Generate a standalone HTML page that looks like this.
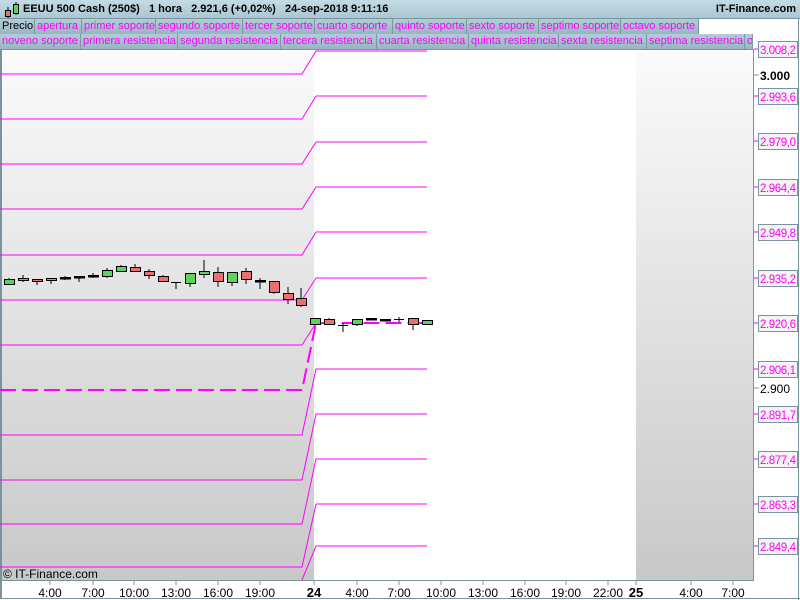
<!DOCTYPE html>
<html><head><meta charset="utf-8"><style>
*{margin:0;padding:0;box-sizing:border-box}
body{width:800px;height:600px;overflow:hidden;background:#fff;font-family:"Liberation Sans",sans-serif;position:relative}
#title{position:absolute;left:0;top:0;width:800px;height:19px;background:linear-gradient(#c4dbe5,#a9c7d3);border-bottom:1px solid #7a949e;font-size:11px;font-weight:bold;color:#000;line-height:19px}
.row{position:absolute;left:0;height:16px;width:753px}
.c{position:absolute;top:0;height:16px;background:linear-gradient(#b3cdd8,#97b6c2);border-right:1px solid #7c98a4;border-bottom:1px solid #7c98a4;color:#f0f;font-size:11px;line-height:15px;padding-left:2px;white-space:nowrap;overflow:hidden}
svg{position:absolute;left:0;top:0}
</style></head><body>
<svg width="800" height="600" font-family="Liberation Sans, sans-serif">
<defs>
<linearGradient id="g" x1="0" y1="0" x2="0" y2="1"><stop offset="0" stop-color="#fbfbfb"/><stop offset="1" stop-color="#c8c8c8"/></linearGradient>
</defs>
<rect x="0" y="49" width="314" height="531" fill="url(#g)"/>
<rect x="314" y="49" width="322" height="531" fill="#fff"/>
<rect x="636" y="49" width="117" height="531" fill="url(#g)"/>
<line x1="1" y1="49" x2="1" y2="598" stroke="#7a949e" stroke-width="2"/>
<line x1="753.5" y1="49" x2="753.5" y2="580" stroke="#7a949e"/>
<line x1="0" y1="580.5" x2="754" y2="580.5" stroke="#7a949e"/>
<line x1="0" y1="598.5" x2="800" y2="598.5" stroke="#7a949e"/>
<line x1="798.5" y1="19" x2="798.5" y2="600" stroke="#7a949e"/>
<g stroke="#f0f" fill="none" stroke-width="1">
<path d="M0 74H302L316 51H427"/>
<path d="M0 119H302L316 96H427"/>
<path d="M0 164H302L316 142H427"/>
<path d="M0 209H302L316 187H427"/>
<path d="M0 255H302L316 232H427"/>
<path d="M0 300H302L316 278H427"/>
<path d="M0 345H302L316 323"/>
<path d="M0 435H302L316 369H427"/>
<path d="M0 480H302L316 414H427"/>
<path d="M0 524H302L316 459H427"/>
<path d="M0 567H302L316 504H427"/>
<path d="M302 580L316 546H427"/>
<path d="M0 390H302L316 323H427" stroke-width="2" stroke-dasharray="16,6"/>
</g>
<g stroke="#000" stroke-width="1">
<line x1="9" y1="278" x2="9" y2="285"/><rect x="4.5" y="279.5" width="10" height="5" fill="#5dd35d"/>
<line x1="23" y1="275" x2="23" y2="282"/><rect x="18.5" y="278.5" width="10" height="2" fill="#5dd35d"/>
<line x1="37" y1="279" x2="37" y2="285"/><rect x="32.5" y="279.5" width="10" height="2" fill="#e87070"/>
<line x1="51" y1="278" x2="51" y2="284"/><rect x="46.5" y="278.5" width="10" height="2" fill="#5dd35d"/>
<line x1="65" y1="276" x2="65" y2="280"/><rect x="60.5" y="277.5" width="10" height="1.5" fill="#000"/>
<line x1="79" y1="276" x2="79" y2="282"/><rect x="74.5" y="276.5" width="10" height="1.5" fill="#000"/>
<line x1="93" y1="273" x2="93" y2="278"/><rect x="88.5" y="275.5" width="10" height="1.5" fill="#000"/>
<line x1="107" y1="268" x2="107" y2="278"/><rect x="102.5" y="270.5" width="10" height="6" fill="#5dd35d"/>
<line x1="121" y1="265" x2="121" y2="272"/><rect x="116.5" y="266.5" width="10" height="5" fill="#5dd35d"/>
<line x1="135" y1="264" x2="135" y2="272"/><rect x="130.5" y="267.5" width="10" height="4" fill="#e87070"/>
<line x1="149" y1="269" x2="149" y2="279"/><rect x="144.5" y="271.5" width="10" height="4" fill="#e87070"/>
<line x1="163" y1="275" x2="163" y2="282"/><rect x="158.5" y="276.5" width="10" height="5" fill="#e87070"/>
<line x1="176" y1="282" x2="176" y2="289"/><line x1="171" y1="282.5" x2="181" y2="282.5"/>
<line x1="190" y1="273" x2="190" y2="287"/><rect x="185.5" y="273.5" width="10" height="10" fill="#5dd35d"/>
<line x1="204" y1="260" x2="204" y2="278"/><rect x="199.5" y="271.5" width="10" height="3" fill="#5dd35d"/>
<line x1="218" y1="267" x2="218" y2="287"/><rect x="213.5" y="272.5" width="10" height="9" fill="#e87070"/>
<line x1="232" y1="272" x2="232" y2="286"/><rect x="227.5" y="272.5" width="10" height="10" fill="#5dd35d"/>
<line x1="246" y1="268" x2="246" y2="284"/><rect x="241.5" y="271.5" width="10" height="8" fill="#e87070"/>
<line x1="260" y1="278" x2="260" y2="289"/><rect x="255.5" y="280.5" width="10" height="1.5" fill="#000"/>
<line x1="274" y1="281" x2="274" y2="294"/><rect x="269.5" y="281.5" width="10" height="11" fill="#e87070"/>
<line x1="288" y1="287" x2="288" y2="304"/><rect x="283.5" y="293.5" width="10" height="6" fill="#e87070"/>
<line x1="301" y1="288" x2="301" y2="307"/><rect x="296.5" y="298.5" width="10" height="7" fill="#e87070"/>
<rect x="310.5" y="318.5" width="10" height="6" fill="#5dd35d"/>
<line x1="329" y1="318" x2="329" y2="324"/><rect x="324.5" y="319.5" width="10" height="5" fill="#e87070"/>
<line x1="343" y1="323" x2="343" y2="332"/><line x1="338" y1="325.5" x2="348" y2="325.5"/>
<line x1="357" y1="319" x2="357" y2="326"/><rect x="352.5" y="319.5" width="10" height="5" fill="#5dd35d"/>
<rect x="366.5" y="318.5" width="10" height="1.5" fill="#000"/>
<rect x="380.5" y="319.5" width="10" height="1.5" fill="#000"/>
<line x1="399" y1="317" x2="399" y2="322"/><line x1="394" y1="319.5" x2="404" y2="319.5"/>
<line x1="413" y1="318" x2="413" y2="330"/><rect x="408.5" y="318.5" width="10" height="6" fill="#e87070"/>
<rect x="422.5" y="320.5" width="10" height="4" fill="#5dd35d"/>
</g>
<g font-size="11.5" fill="#f0f">
<g stroke="#f0f"><line x1="754" y1="49" x2="759" y2="49"/><line x1="754" y1="96" x2="759" y2="96"/><line x1="754" y1="141" x2="759" y2="141"/><line x1="754" y1="187" x2="759" y2="187"/><line x1="754" y1="232" x2="759" y2="232"/><line x1="754" y1="278" x2="759" y2="278"/><line x1="754" y1="323" x2="759" y2="323"/><line x1="754" y1="369" x2="759" y2="369"/><line x1="754" y1="414" x2="759" y2="414"/><line x1="754" y1="459" x2="759" y2="459"/><line x1="754" y1="504" x2="759" y2="504"/><line x1="754" y1="546" x2="759" y2="546"/></g>
<g stroke="#7a949e" fill="#f4f4f4">
<rect x="758.5" y="41.5" width="39" height="16"/><rect x="758.5" y="88.5" width="39" height="16"/><rect x="758.5" y="133.5" width="39" height="16"/><rect x="758.5" y="179.5" width="39" height="16"/><rect x="758.5" y="224.5" width="39" height="16"/><rect x="758.5" y="270.5" width="39" height="16"/><rect x="758.5" y="315.5" width="39" height="16"/><rect x="758.5" y="361.5" width="39" height="16"/><rect x="758.5" y="406.5" width="39" height="16"/><rect x="758.5" y="451.5" width="39" height="16"/><rect x="758.5" y="496.5" width="39" height="16"/><rect x="758.5" y="538.5" width="39" height="16"/>
</g>
<g lengthAdjust="spacingAndGlyphs">
<text x="760" y="54" textLength="36">3.008,2</text><text x="760" y="101" textLength="36">2.993,6</text><text x="760" y="146" textLength="36">2.979,0</text><text x="760" y="192" textLength="36">2.964,4</text><text x="760" y="237" textLength="36">2.949,8</text><text x="760" y="283" textLength="36">2.935,2</text><text x="760" y="328" textLength="36">2.920,6</text><text x="760" y="374" textLength="36">2.906,1</text><text x="760" y="419" textLength="36">2.891,7</text><text x="760" y="464" textLength="36">2.877,4</text><text x="760" y="509" textLength="36">2.863,3</text><text x="760" y="551" textLength="36">2.849,4</text>
</g>
</g>
<g stroke="#7a949e"><line x1="754" y1="75" x2="759" y2="75"/><line x1="754" y1="388" x2="759" y2="388"/></g>
<text x="760" y="80" font-size="12" font-weight="bold">3.000</text>
<text x="760" y="393" font-size="12">2.900</text>
<g stroke="#7a949e"><line x1="50" y1="581" x2="50" y2="585"/><line x1="93" y1="581" x2="93" y2="585"/><line x1="134" y1="581" x2="134" y2="585"/><line x1="176" y1="581" x2="176" y2="585"/><line x1="218" y1="581" x2="218" y2="585"/><line x1="260" y1="581" x2="260" y2="585"/><line x1="314" y1="581" x2="314" y2="585"/><line x1="357" y1="581" x2="357" y2="585"/><line x1="399" y1="581" x2="399" y2="585"/><line x1="441" y1="581" x2="441" y2="585"/><line x1="483" y1="581" x2="483" y2="585"/><line x1="525" y1="581" x2="525" y2="585"/><line x1="566" y1="581" x2="566" y2="585"/><line x1="608" y1="581" x2="608" y2="585"/><line x1="636" y1="581" x2="636" y2="585"/><line x1="691" y1="581" x2="691" y2="585"/><line x1="733" y1="581" x2="733" y2="585"/></g>
<g font-size="12" text-anchor="middle" fill="#000">
<text x="50" y="597">4:00</text><text x="93" y="597">7:00</text><text x="134" y="597">10:00</text><text x="176" y="597">13:00</text><text x="218" y="597">16:00</text><text x="260" y="597">19:00</text>
<text x="314" y="597" font-weight="bold" font-size="13">24</text>
<text x="357" y="597">4:00</text><text x="399" y="597">7:00</text><text x="441" y="597">10:00</text><text x="483" y="597">13:00</text><text x="525" y="597">16:00</text><text x="566" y="597">19:00</text><text x="608" y="597">22:00</text>
<text x="636" y="597" font-weight="bold" font-size="13">25</text>
<text x="691" y="597">4:00</text><text x="733" y="597">7:00</text>
</g>
<text x="3" y="578" font-size="12">© IT-Finance.com</text>
</svg>
<div id="title">
<svg width="20" height="19" style="position:absolute;left:2px;top:0"><line x1="6" y1="7" x2="6" y2="18" stroke="#000"/><rect x="3.5" y="10.5" width="5" height="6" fill="#e87070" stroke="#000"/><line x1="14" y1="2" x2="14" y2="15" stroke="#000"/><rect x="11.5" y="4.5" width="5" height="9" fill="#5dd35d" stroke="#000"/></svg>
<span style="position:absolute;left:23px">EEUU 500 Cash (250$)&nbsp;&nbsp;&nbsp;1 hora&nbsp;&nbsp;&nbsp;2.921,6 (+0,02%)&nbsp;&nbsp;&nbsp;24-sep-2018 9:11:16</span>
<span style="position:absolute;right:4px">IT-Finance.com</span>
</div>
<div class="row" style="top:19px;width:699px">
<div class="c" style="left:0;width:35px;color:#000">Precio</div>
<div class="c" style="left:35px;width:47px">apertura</div>
<div class="c" style="left:82px;width:74px">primer soporte</div>
<div class="c" style="left:156px;width:87px">segundo soporte</div>
<div class="c" style="left:243px;width:72px">tercer soporte</div>
<div class="c" style="left:315px;width:78px">cuarto soporte</div>
<div class="c" style="left:393px;width:74px">quinto soporte</div>
<div class="c" style="left:467px;width:72px">sexto soporte</div>
<div class="c" style="left:539px;width:82px">septimo soporte</div>
<div class="c" style="left:621px;width:78px">octavo soporte</div>
</div>
<div class="row" style="top:34px">
<div class="c" style="left:0;width:81px">noveno soporte</div>
<div class="c" style="left:81px;width:97px">primera resistencia</div>
<div class="c" style="left:178px;width:103px">segunda resistencia</div>
<div class="c" style="left:281px;width:96px">tercera resistencia</div>
<div class="c" style="left:377px;width:92px">cuarta resistencia</div>
<div class="c" style="left:469px;width:90px">quinta resistencia</div>
<div class="c" style="left:559px;width:88px">sexta resistencia</div>
<div class="c" style="left:647px;width:98px">septima resistencia</div>
<div class="c" style="left:745px;width:8px">o</div>
</div>
</body></html>
